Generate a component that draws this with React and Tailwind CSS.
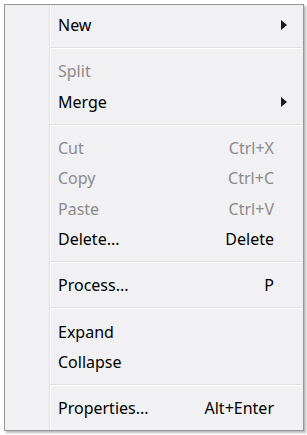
import React from 'react';

const items = [
  { label: 'New', submenu: true },
  { sep: true },
  { label: 'Split', disabled: true },
  { label: 'Merge', submenu: true },
  { sep: true },
  { label: 'Cut', shortcut: 'Ctrl+X', disabled: true },
  { label: 'Copy', shortcut: 'Ctrl+C', disabled: true },
  { label: 'Paste', shortcut: 'Ctrl+V', disabled: true },
  { label: 'Delete...', shortcut: 'Delete' },
  { sep: true },
  { label: 'Process...', shortcut: 'P' },
  { sep: true },
  { label: 'Expand' },
  { label: 'Collapse' },
  { sep: true },
  { label: 'Properties...', shortcut: 'Alt+Enter' },
];

const Arrow = () => (
  <svg width="6" height="10" viewBox="0 0 6 10" className="block">
    <path d="M0 0 L6 5 L0 10 Z" fill="#1a1a1a" />
  </svg>
);

const ContextMenu = () => {
  return (
    <div className="w-[300px] h-[427px] border border-[#979797] bg-[#f1f0f2] shadow-[2px_2px_2px_rgba(0,0,0,0.28)] bg-[linear-gradient(to_right,transparent_44px,#e2e3e3_44px,#e2e3e3_45px,#ffffff_45px,#ffffff_46px,transparent_46px)] pt-[5px]">
      {items.map((item, index) => {
        if (item.sep) {
          return (
            <div key={index} className="h-[16px] flex flex-col justify-center pl-[45px] pr-[1px]">
              <div className="border-t border-b border-t-[#e0e0e0] border-b-white" />
            </div>
          );
        }
        return (
          <div
            key={index}
            className={
              'h-[30.3px] flex items-center pl-[53px] pr-[16px] ' +
              (item.disabled ? 'text-[#8b8b8b]' : 'text-black')
            }
          >
            <span className="flex-1">{item.label}</span>
            {item.shortcut && <span className="mr-[13px]">{item.shortcut}</span>}
            {item.submenu && <Arrow />}
          </div>
        );
      })}
    </div>
  );
};

export default function App() {
  return (
    <div className="w-[307px] h-[435px] bg-white pt-[4px] pl-[4px] font-['Noto_Sans',sans-serif] text-[16px] leading-none">
      <ContextMenu />
    </div>
  );
}
